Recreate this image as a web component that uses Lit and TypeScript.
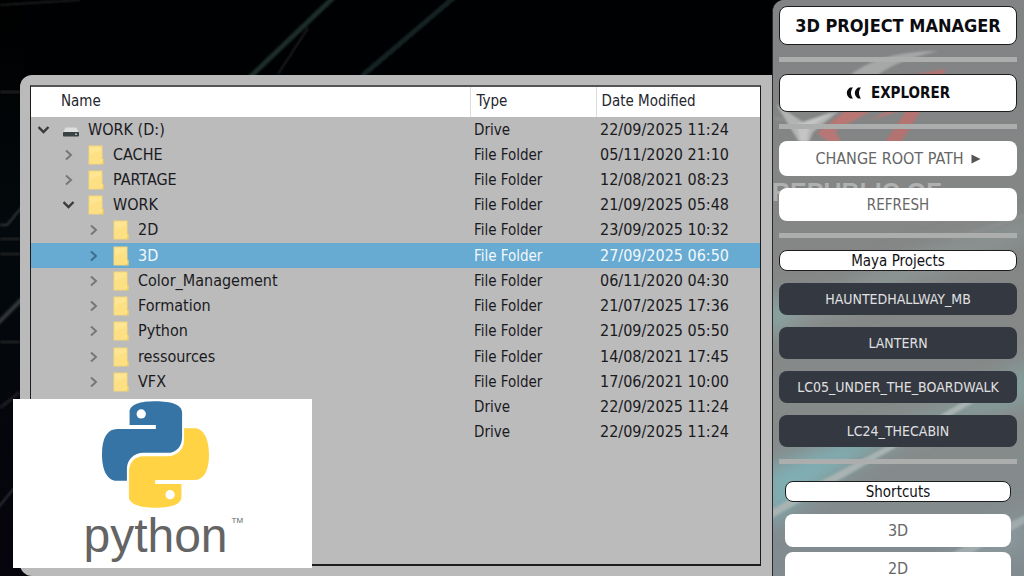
import { LitElement, html, css, svg, nothing } from "lit";
import { customElement, property, state } from "lit/decorators.js";
import { classMap } from "lit/directives/class-map.js";

interface Entry {
  name: string;
  level: number;
  kind: "drive" | "folder" | "none";
  open?: boolean;
  type: string;
  date: string;
}

const ENTRIES: Entry[] = [
  { name: "WORK (D:)", level: 0, kind: "drive", open: true, type: "Drive", date: "22/09/2025 11:24" },
  { name: "CACHE", level: 1, kind: "folder", type: "File Folder", date: "05/11/2020 21:10" },
  { name: "PARTAGE", level: 1, kind: "folder", type: "File Folder", date: "12/08/2021 08:23" },
  { name: "WORK", level: 1, kind: "folder", open: true, type: "File Folder", date: "21/09/2025 05:48" },
  { name: "2D", level: 2, kind: "folder", type: "File Folder", date: "23/09/2025 10:32" },
  { name: "3D", level: 2, kind: "folder", type: "File Folder", date: "27/09/2025 06:50" },
  { name: "Color_Management", level: 2, kind: "folder", type: "File Folder", date: "06/11/2020 04:30" },
  { name: "Formation", level: 2, kind: "folder", type: "File Folder", date: "21/07/2025 17:36" },
  { name: "Python", level: 2, kind: "folder", type: "File Folder", date: "21/09/2025 05:50" },
  { name: "ressources", level: 2, kind: "folder", type: "File Folder", date: "14/08/2021 17:45" },
  { name: "VFX", level: 2, kind: "folder", type: "File Folder", date: "17/06/2021 10:00" },
  { name: "", level: 0, kind: "none", type: "Drive", date: "22/09/2025 11:24" },
  { name: "", level: 0, kind: "none", type: "Drive", date: "22/09/2025 11:24" },
];

const folderIcon = html`<svg class="icon" viewBox="0 0 16 20" aria-hidden="true">
  <path d="M0.5 0.5H14.5V13.5l1 1V19.5H0.5z" fill="#f3d577" />
  <path d="M1.5 1.5H13.5V18.5H1.5z" fill="#fde592" />
  <path d="M1.5 10L13.5 5V18.5H1.5z" fill="#fde083" />
  <path d="M13.5 12.5l1.8 1.5v5h-2.600z" fill="#f7cf58" />
  <path d="M13.600 14v4" stroke="#fff0b5" stroke-width="0.8" />
</svg>`;

const driveIcon = html`<svg class="icon" viewBox="0 0 16 20" aria-hidden="true">
  <path d="M2.500 7.500H13.500L15.500 12H0.500z" fill="#dcdede" />
  <rect x="0" y="12" width="16" height="4.500" rx="0.800" fill="#3b4144" />
  <rect x="12" y="13.500" width="2" height="1.400" fill="#9fd3b2" />
</svg>`;

@customElement("file-explorer")
export class FileExplorer extends LitElement {
  @state() private selected = 5;

  static styles = css`
    :host {
      display: block;
      box-sizing: border-box;
      padding: 10px 11px 10px 10px;
      border-radius: 12px 0 0 12px;
      background: #bababa;
    }
    .frame {
      box-sizing: border-box;
      height: 100%;
      border: 1px solid #1c1c1c;
      border-top: 2px solid #555555;
      border-bottom-width: 2px;
      background: #bbbbbb;
      overflow: hidden;
    }
    table {
      width: 100%;
      height: 358px;
      border-collapse: collapse;
      table-layout: fixed;
      font-size: 16px;
      line-height: 20px;
      color: #1a1a1e;
    }
    .col-type {
      width: 126px;
    }
    .col-date {
      width: 164px;
    }
    th {
      height: 30px;
      box-sizing: border-box;
      padding: 0 6px 2px;
      background: #ffffff;
      border-right: 1px solid #dcdcdc;
      text-align: left;
      font-size: 15px;
      font-weight: normal;
      color: #26262e;
    }
    th:first-child {
      padding-left: 30px;
    }
    th:last-child {
      padding-left: 5px;
      border-right: none;
    }
    td {
      height: 25px;
      padding: 0 4px;
      white-space: nowrap;
    }
    td:first-child {
      padding: 0;
    }
    .type {
      font-size: 15px;
    }
    .selected {
      background: #67aad2;
      color: #f2f8fc;
    }
    .cell {
      display: flex;
      align-items: center;
      height: 25px;
    }
    .level-1 {
      padding-left: 25px;
    }
    .level-2 {
      padding-left: 50px;
    }
    .toggle {
      display: flex;
      align-items: center;
      justify-content: center;
      width: 25px;
      height: 25px;
      margin-right: 7px;
      padding: 0;
      border: none;
      background: none;
    }
    .chevron {
      width: 12px;
      height: 12px;
      fill: none;
      stroke: #777777;
      stroke-width: 2;
    }
    .open .chevron {
      stroke: #3a3a3a;
      stroke-width: 2.4;
    }
    .selected .chevron {
      stroke: #3d6f91;
    }
    .icon {
      width: 16px;
      height: 20px;
      margin-right: 9px;
    }
  `;

  render() {
    return html`<div class="frame">
      <table>
        <colgroup>
          <col />
          <col class="col-type" />
          <col class="col-date" />
        </colgroup>
        <thead>
          <tr><th scope="col">Name</th><th scope="col">Type</th><th scope="col">Date Modified</th></tr>
        </thead>
        <tbody>
          ${ENTRIES.map((e, i) => this.row(e, i))}
        </tbody>
      </table>
    </div>`;
  }

  private row(e: Entry, i: number) {
    return html`<tr class=${classMap({ selected: i === this.selected })} @click=${() => (this.selected = i)}>
      <td>
        ${e.kind === "none"
          ? nothing
          : html`<div class="cell level-${e.level}">
              <button class=${classMap({ toggle: true, open: !!e.open })} aria-label="Toggle ${e.name}">
                <svg class="chevron" viewBox="0 0 12 12">
                  ${e.open ? svg`<path d="M0.5 3L5.500 8L10.500 3" />` : svg`<path d="M3 1.500L8 6L3 10.500" />`}
                </svg>
              </button>
              ${e.kind === "drive" ? driveIcon : folderIcon}
              <span>${e.name}</span>
            </div>`}
      </td>
      <td class="type">${e.type}</td>
      <td>${e.date}</td>
    </tr>`;
  }
}

@customElement("project-sidebar")
export class ProjectSidebar extends LitElement {
  @property({ type: Array }) projects: string[] = [];
  @property({ type: Array }) shortcuts: string[] = [];

  static styles = css`
    :host {
      display: block;
      position: relative;
      box-sizing: border-box;
      border-left: 1px solid #2a2a2a;
      border-radius: 12px 0 0 0;
      background: #848484;
      overflow: hidden;
    }
    .art {
      position: absolute;
      top: 0;
      left: 0;
      width: 100%;
      height: 100%;
    }
    .content {
      position: relative;
      display: flex;
      flex-direction: column;
      gap: 12px;
      padding: 6px 7px 6px 6px;
    }
    .title,
    .label,
    button {
      box-sizing: border-box;
      display: flex;
      align-items: center;
      justify-content: center;
      margin: 0;
      padding: 0;
      border: none;
      border-radius: 8px;
      background: #ffffff;
      font-family: inherit;
      font-weight: normal;
      color: #666666;
      white-space: nowrap;
    }
    .title {
      height: 39px;
      border: 1px solid #1c1c1c;
      font-size: 18px;
      font-weight: bold;
      color: #0c0c10;
    }
    .explorer {
      height: 38px;
      gap: 10px;
      border: 1px solid #1c1c1c;
      font-size: 15px;
      font-weight: bold;
      color: #0c0c10;
    }
    .label {
      height: 21px;
      padding-top: 2px;
      border: 1px solid #1c1c1c;
      font-size: 15px;
      line-height: 17px;
      color: #101014;
    }
    hr {
      width: 100%;
      height: 5px;
      margin: 0;
      border: none;
      background: #acadad;
    }
    .root {
      height: 35px;
      gap: 7px;
      font-size: 16px;
    }
    .plain {
      height: 33px;
      font-size: 15px;
    }
    .project {
      height: 32px;
      background: #343841;
      font-size: 14px;
      color: #e0e0e2;
    }
    .shortcuts {
      display: flex;
      flex-direction: column;
      gap: 12px;
      padding: 5px 6px 0;
    }
    .list {
      display: flex;
      flex-direction: column;
      gap: 5px;
    }
    .list .plain {
      font-size: 16px;
    }
    .back {
      width: 15px;
      height: 12px;
    }
    .arrow {
      width: 10px;
      height: 10px;
    }
  `;

  render() {
    return html`
      <svg class="art" viewBox="0 0 252 576" preserveAspectRatio="xMinYMin slice" aria-hidden="true">
        <defs>
          <linearGradient id="teal" x1="0" y1="0" x2="0" y2="1">
            <stop offset="0" stop-color="#828384" />
            <stop offset="0.45" stop-color="#858686" />
            <stop offset="0.75" stop-color="#868b8a" />
            <stop offset="1" stop-color="#818b90" />
          </linearGradient>
          <filter id="soft" x="-50%" y="-50%" width="200%" height="200%"><feGaussianBlur stdDeviation="10" /></filter>
          <filter id="edge"><feGaussianBlur stdDeviation="1" /></filter>
        </defs>
        <rect width="252" height="576" fill="url(#teal)" />
        <g filter="url(#soft)">
          <path d="M-10 310L60 290L140 255L260 220V235L120 290L-10 340z" fill="#8b9694" />
          <path d="M-10 300L25 295L15 325L-10 335z" fill="#87a5a3" />
          <path d="M-10 500L80 440L170 410L260 360V400L170 420L90 460L-10 530z" fill="#83a09f" />
          <path d="M-10 470L70 440L120 430L20 500L-10 530z" fill="#80afb4" />
          <path d="M150 576L252 510V545L190 576z" fill="#8a999d" />
        </g>
        <g filter="url(#edge)">
          <path d="M76 76C98 58 130 51 165 51C140 57 118 64 104 76z" fill="#a6a7a7" />
          <path d="M3 104L30 122L66 111L40 132L36 142H26z" fill="#b2b3b3" />
          <path d="M24 124L60 112L36 128L34 141H27z" fill="#c4c4c4" />
          <path d="M-2 117L16 121L4 119z" fill="#b4b4b4" />
          <path d="M140 75L172 69L170 78L152 104L128 142H112L138 104z" fill="#b27371" />
          <path d="M72 111H98L62 131L68 142H56L44 133z" fill="#b87774" />
          <path d="M98 120L130 110L112 112z" fill="#b87774" />
          <path d="M-5 512L50 480L118 444L200 396L205 400L120 449L52 488L-5 520z" fill="#a8b3b2" />
          <path d="M175 555L252 515V523L190 558z" fill="#a0abad" />
          <path d="M180 240L252 215" stroke="#8d8f8f" stroke-width="3" />
        </g>
        <text x="-1" y="201" font-family="Liberation Sans, sans-serif" font-size="25" font-weight="bold" fill="#afb0b0">REPUBLIC OF</text>
      </svg>
      <div class="content">
        <h1 class="title">3D PROJECT MANAGER</h1>
        <hr />
        <button class="explorer">
          <svg class="back" viewBox="0 0 15 12" aria-hidden="true">
            <path d="M7 0.500H4C2 2 0.800 3.800 0.800 6S2 10 4 11.500H7C5.700 9.800 5 8 5 6S5.700 2.200 7 0.500z" fill="#0c0c10" />
            <path d="M15 0.500H12C10 2 8.800 3.800 8.800 6S10 10 12 11.500H15C13.700 9.800 13 8 13 6S13.700 2.200 15 0.500z" fill="#0c0c10" />
          </svg>
          EXPLORER
        </button>
        <hr />
        <button class="root">
          CHANGE ROOT PATH
          <svg class="arrow" viewBox="0 0 10 10" aria-hidden="true"><path d="M0.500 0.500L9.500 5L0.500 9.500z" fill="#555555" /></svg>
        </button>
        <button class="plain">REFRESH</button>
        <hr />
        <h2 class="label">Maya Projects</h2>
        ${this.projects.map((p) => html`<button class="project">${p}</button>`)}
        <hr />
        <section class="shortcuts">
          <h2 class="label">Shortcuts</h2>
          <div class="list">${this.shortcuts.map((s) => html`<button class="plain">${s}</button>`)}</div>
        </section>
      </div>
    `;
  }
}

@customElement("python-card")
export class PythonCard extends LitElement {
  static styles = css`
    :host {
      display: flex;
      flex-direction: column;
      align-items: center;
      box-sizing: border-box;
      padding: 2px 14px 0 0;
      background: #ffffff;
    }
    .logo {
      width: 107px;
      height: 107px;
    }
    .word {
      position: relative;
      font-family: "Liberation Sans", sans-serif;
      font-size: 48px;
      line-height: 56px;
      color: #646464;
    }
    .tm {
      position: absolute;
      top: 7px;
      left: 100%;
      padding-left: 4px;
      font-size: 8px;
      line-height: 12px;
    }
  `;

  render() {
    const snake =
      "M468 104H389V66C389 42 420 33 468 33C515 33 547 44 547 66V140C547 168 530 188 503 188H430C404 188 381 208 381 236V272H350C322 272 306 240 306 193C306 142 322 116 352 116H468z";
    return html`
      <svg class="logo" viewBox="306 33 322 320" role="img" aria-label="Python">
        <path d=${snake} fill="#3674a5" />
        <circle cx="424" cy="71" r="14" fill="#ffffff" />
        <path d=${snake} fill="#ffd343" transform="rotate(180 467 193)" />
        <circle cx="511" cy="314" r="14" fill="#ffffff" />
      </svg>
      <div class="word">python<span class="tm">TM</span></div>
    `;
  }
}

@customElement("app-root")
export class AppRoot extends LitElement {
  static styles = css`
    :host {
      display: block;
      position: relative;
      height: 100vh;
      overflow: hidden;
      background: #000103;
      font-family: "DejaVu Sans Condensed", "Noto Sans", sans-serif;
    }
    .wallpaper {
      position: absolute;
      top: 0;
      left: 0;
      width: 100%;
      height: 100%;
    }
    .desk {
      position: relative;
      display: grid;
      grid-template-columns: minmax(0, 1fr) 252px;
      height: 100%;
    }
    .files {
      margin: 75px 0 0 20px;
    }
    .card {
      position: absolute;
      left: 13px;
      bottom: 8px;
      width: 299px;
      height: 169px;
    }
  `;

  render() {
    return html`
      <svg class="wallpaper" viewBox="0 0 1024 576" preserveAspectRatio="xMinYMin slice" aria-hidden="true">
        <defs>
          <filter id="haze"><feGaussianBlur stdDeviation="1" /></filter>
          <linearGradient id="side" x1="0" y1="0" x2="0" y2="1">
            <stop offset="0" stop-color="#000000" />
            <stop offset="0.4" stop-color="#03090c" />
            <stop offset="1" stop-color="#06040c" />
          </linearGradient>
        </defs>
        <rect width="24" height="576" fill="url(#side)" />
        <g filter="url(#haze)" fill="none">
          <path d="M335 -4L249 78" stroke="#1e2d2b" stroke-width="5" />
          <path d="M308 28L278 74" stroke="#1d1f20" stroke-width="2" />
          <path d="M458 -6L362 76" stroke="#132321" stroke-width="5" />
          <path d="M0 5L80 0" stroke="#1c1e1e" stroke-width="2" />
          <path d="M0 92H20" stroke="#25292b" stroke-width="2" />
          <path d="M0 225H7L22 207" stroke="#33383a" stroke-width="2" />
          <path d="M0 239H20M0 254H20M0 342H20" stroke="#25292b" stroke-width="2" />
          <path d="M-2 323L22 299" stroke="#34383a" stroke-width="4" />
          <path d="M-2 508L14 488" stroke="#34343a" stroke-width="2" />
          <path d="M0 408L20 392" stroke="#1a1820" stroke-width="4" />
        </g>
      </svg>
      <main class="desk">
        <file-explorer class="files"></file-explorer>
        <project-sidebar
          .projects=${["HAUNTEDHALLWAY_MB", "LANTERN", "LC05_UNDER_THE_BOARDWALK", "LC24_THECABIN"]}
          .shortcuts=${["3D", "2D"]}
        ></project-sidebar>
      </main>
      <python-card class="card"></python-card>
    `;
  }
}
